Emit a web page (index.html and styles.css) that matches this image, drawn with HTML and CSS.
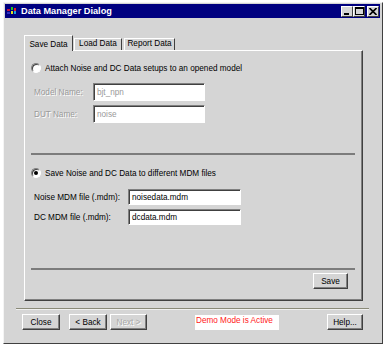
FILE: index.html
```html
<!DOCTYPE html>
<html lang="en">
<head>
  <meta charset="UTF-8" />
  <title>Data Manager Dialog</title>
  <link rel="stylesheet" href="styles.css">
</head>
<body>
  <div class="window">
    <div class="titlebar">
      <svg class="appicon" width="9" height="8" viewBox="0 0 9 8">
        <rect x="0" y="2" width="3" height="2" fill="#c01040"/>
        <rect x="0" y="5" width="3" height="2" fill="#3030c0"/>
        <rect x="4" y="0" width="2" height="3" fill="#20c020"/>
        <rect x="4" y="4" width="2" height="3" fill="#e0e020"/>
        <rect x="7" y="1" width="2" height="3" fill="#e02020"/>
        <rect x="7" y="4" width="2" height="3" fill="#20a0e0"/>
      </svg>
      <span class="title">Data Manager Dialog</span>
      <div class="caption-btns">
        <span class="cbtn"><svg width="8" height="7" viewBox="0 0 8 7"><rect x="1" y="5" width="5" height="2" fill="#000"/></svg></span>
        <span class="cbtn"><svg width="9" height="8" viewBox="0 0 9 8"><rect x="0.5" y="0.5" width="8" height="7" fill="none" stroke="#000"/><rect x="0" y="0" width="9" height="2" fill="#000"/></svg></span>
        <span class="cbtn close"><svg width="8" height="7" viewBox="0 0 8 7"><path d="M0.5 0 L7.5 7 M7.5 0 L0.5 7" stroke="#000" stroke-width="1.6"/></svg></span>
      </div>
    </div>

    <div class="content">
      <div class="tabs">
        <div class="tab active">Save Data</div>
        <div class="tab load">Load Data</div>
        <div class="tab report">Report Data</div>
      </div>

      <div class="panel">
        <div class="radio-row first">
          <span class="radio"></span>
          <span>Attach Noise and DC Data setups to an opened model</span>
        </div>
        <div class="field model-row">
          <span class="label disabled">Model Name:</span>
          <span class="input wide disabled-text">bjt_npn</span>
        </div>
        <div class="field dut-row">
          <span class="label disabled">DUT Name:</span>
          <span class="input wide disabled-text">noise</span>
        </div>

        <div class="sep sep-one"></div>

        <div class="radio-row second">
          <span class="radio checked"></span>
          <span>Save Noise and DC Data to different MDM files</span>
        </div>
        <div class="field noise-row">
          <span class="label long">Noise MDM file (.mdm):</span>
          <span class="input file">noisedata.mdm</span>
        </div>
        <div class="field dc-row">
          <span class="label long">DC MDM file (.mdm):</span>
          <span class="input file">dcdata.mdm</span>
        </div>

        <div class="sep sep-two"></div>

        <div class="save-row">
          <span class="btn save">Save</span>
        </div>
      </div>

      <div class="footer-line"></div>
      <div class="footer">
        <span class="btn close-btn">Close</span>
        <span class="btn back">&lt; Back</span>
        <span class="btn next">Next &gt;</span>
        <span class="demo">Demo Mode is Active</span>
        <span class="btn help">Help...</span>
      </div>
    </div>
  </div>
</body>
</html>
```

FILE: styles.css
```css
body {
  margin: 0;
  background: #ffffff;
  font-family: "Liberation Sans", Arial, sans-serif;
  font-size: 8.2px;
  color: #000;
}

.window {
  margin: 2px 0 0 3px;
  width: 380px;
  height: 342px;
  box-sizing: border-box;
  background: #d5d5d5;
  border-top: 1px solid #f4f4f4;
  border-left: 1px solid #f4f4f4;
  border-right: 1px solid #404040;
  border-bottom: 1px solid #404040;
  padding: 1px 2px 0 1px;
}

.titlebar {
  height: 14px;
  background: #000080;
  display: flex;
  align-items: center;
  padding-left: 1px;
}
.appicon {
  margin-left: 1px;
}
.title {
  color: #fff;
  font-weight: bold;
  font-size: 9.2px;
  margin-left: 5px;
}
.caption-btns {
  margin-left: auto;
  display: flex;
  margin-right: 1px;
}
.cbtn {
  width: 12px;
  height: 11px;
  box-sizing: border-box;
  background: #d5d5d5;
  border-top: 1px solid #fff;
  border-left: 1px solid #fff;
  border-right: 1px solid #404040;
  border-bottom: 1px solid #404040;
  display: flex;
  align-items: center;
  justify-content: center;
}
.cbtn.close {
  margin-left: 2px;
}

.content {
  padding: 17px 0 0 19px;
}

.tabs {
  display: flex;
  align-items: flex-end;
  height: 15px;
  position: relative;
  z-index: 1;
}
.tab {
  height: 12px;
  box-sizing: border-box;
  border-top: 1px solid #fff;
  border-left: 1px solid #fff;
  border-right: 1px solid #404040;
  line-height: 10px;
  margin-left: 1px;
  white-space: nowrap;
  text-align: center;
}
.tab.active {
  width: 49px;
  height: 16px;
  margin-bottom: -1px;
  margin-left: 0;
  background: #d5d5d5;
  padding-top: 3px;
  line-height: 11px;
}
.tab.load { width: 48px; }
.tab.report { width: 51px; margin-left: 2px; }

.panel {
  width: 339px;
  height: 251px;
  box-sizing: border-box;
  border-top: 1px solid #fff;
  border-left: 1px solid #fff;
  border-right: 1px solid #404040;
  border-bottom: 1px solid #404040;
  box-shadow: inset -1px -1px 0 #808080;
  padding-left: 6px;
}

.radio-row {
  display: flex;
  align-items: center;
  height: 12px;
}
.radio-row.first {
  margin-top: 11px;
}
.radio-row.second {
  margin-top: 12px;
}
.radio {
  width: 10px;
  height: 10px;
  box-sizing: border-box;
  border-radius: 50%;
  background: #fff;
  border: 1px solid;
  border-color: #808080 #fff #fff #808080;
  box-shadow: inset 1px 1px 0 #404040;
  margin-right: 4px;
  display: flex;
  align-items: center;
  justify-content: center;
}
.radio.checked::after {
  content: "";
  width: 4px;
  height: 4px;
  border-radius: 50%;
  background: #000;
}

.field {
  display: flex;
  align-items: center;
  padding-left: 3px;
}
.model-row { margin-top: 9px; }
.dut-row { margin-top: 4px; }
.noise-row { margin-top: 10px; }
.dc-row { margin-top: 4px; }

.label {
  width: 59px;
}
.label.long {
  width: 94px;
}
.label.disabled {
  color: #9a9a9a;
  text-shadow: 1px 1px 0 #fff;
}

.input {
  box-sizing: border-box;
  background: #fff;
  border-top: 1px solid #808080;
  border-left: 1px solid #808080;
  border-right: 1px solid #fff;
  border-bottom: 1px solid #fff;
  box-shadow: inset 1px 1px 0 #404040;
  padding: 0 3px;
  display: flex;
  align-items: center;
}
.input.wide {
  width: 112px;
  height: 18px;
}
.input.file {
  width: 113px;
  height: 16px;
}
.disabled-text {
  color: #9a9a9a;
}

.sep {
  height: 2px;
  background: #7c7c7c;
  margin-right: 7px;
}
.sep-one { margin-top: 30px; }
.sep-two { margin-top: 43px; }

.save-row {
  display: flex;
  justify-content: flex-end;
  margin-top: 3px;
  margin-right: 14px;
}

.btn {
  box-sizing: border-box;
  height: 16px;
  background: #d5d5d5;
  border-top: 1px solid #fff;
  border-left: 1px solid #fff;
  border-right: 1px solid #404040;
  border-bottom: 1px solid #404040;
  box-shadow: inset -1px -1px 0 #808080;
  display: flex;
  align-items: center;
  justify-content: center;
}
.btn.save { width: 35px; }

.footer-line {
  height: 1px;
  background: #8a8a78;
  margin: 7px 0 0 -8px;
  width: 353px;
  border-bottom: 1px solid #f0f0f0;
}

.footer {
  display: flex;
  align-items: center;
  margin-top: 4px;
  margin-left: -2px;
}
.close-btn { width: 38px; }
.back { width: 38px; margin-left: 9px; }
.next {
  width: 37px;
  margin-left: 3px;
  color: #a8a8a8;
  text-shadow: 1px 1px 0 #fff;
}
.demo {
  width: 84px;
  height: 15px;
  box-sizing: border-box;
  background: #fff;
  color: #ff2020;
  margin-left: 48px;
  padding: 1px 0 0 1px;
  line-height: 10px;
}
.help { width: 36px; margin-left: 48px; }
```
